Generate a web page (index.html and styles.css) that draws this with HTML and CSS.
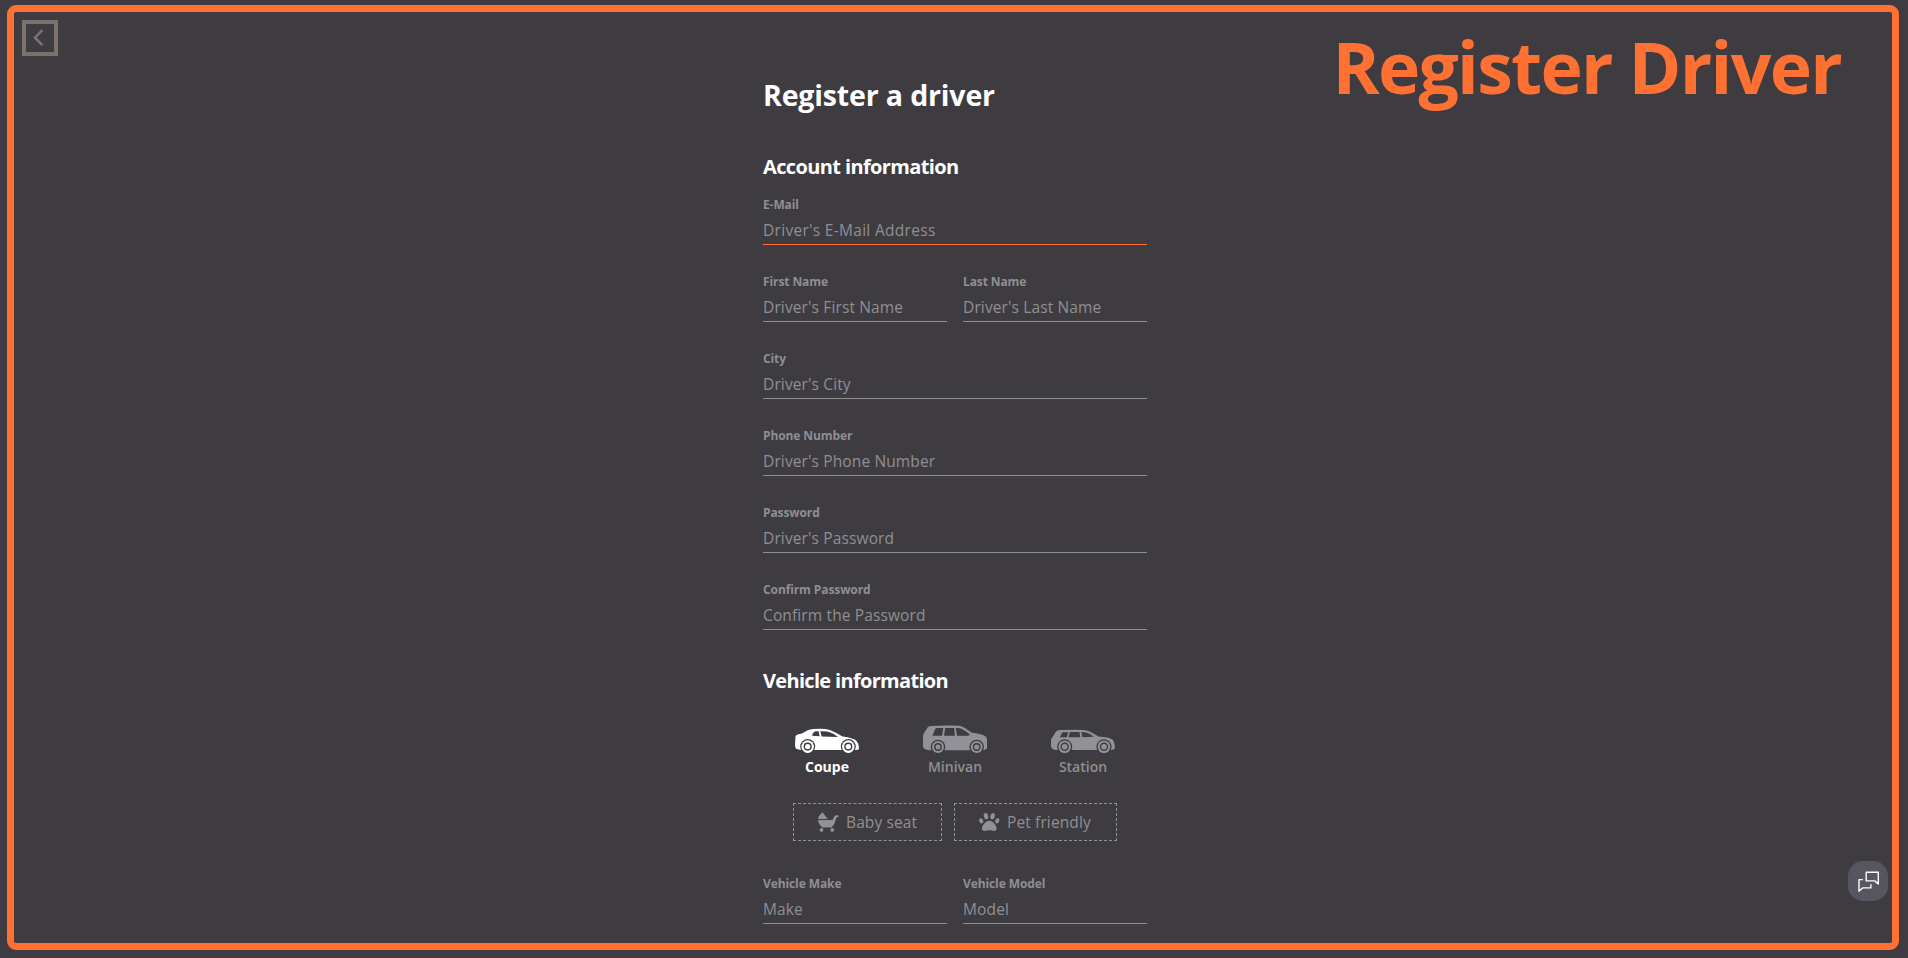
FILE: index.html
```
<!DOCTYPE html>
<html lang="en">
<head>
<meta charset="utf-8">
<title>Register Driver</title>
<link rel="stylesheet" href="styles.css">
</head>
<body>
<div class="frame">
  <button class="back" aria-label="Back"><svg width="30" height="30" viewBox="0 0 30 30"><path d="M17.300 7.200 L10 14.700 L17.300 22.200"/></svg></button>
  <main class="form">
    <h1>Register a driver</h1>
    <h2>Account information</h2>
    <div class="field active"><label>E-Mail</label><div class="input">Driver's E-Mail Address</div></div>
    <div class="pair">
      <div class="field"><label>First Name</label><div class="input">Driver's First Name</div></div>
      <div class="field"><label>Last Name</label><div class="input">Driver's Last Name</div></div>
    </div>
    <div class="field"><label>City</label><div class="input">Driver's City</div></div>
    <div class="field"><label>Phone Number</label><div class="input">Driver's Phone Number</div></div>
    <div class="field"><label>Password</label><div class="input">Driver's Password</div></div>
    <div class="field"><label>Confirm Password</label><div class="input">Confirm the Password</div></div>
    <h2 class="vehicle">Vehicle information</h2>
    <div class="types">
      <div class="type selected">
        <svg width="64" height="32" viewBox="0 0 64 32">
          <path class="body" d="M0 23 L.5 14.500 Q1 12.600 3.500 12.300 L7 11.500 Q13 7.400 18 7 Q29 6 35 8 Q41 10.500 47.500 14.500 Q59 16 61.500 19 Q64 22 64 25.500 L63.500 27.800 L60 28 H6 L1.500 27 Q0 26 0 23Z"/>
          <path class="cut" d="M17.200 13.800 Q17 11 20.500 9.300 H23.600 L24.600 14.200Z M25.200 9.300 Q30 8.800 34 10 Q39 11.500 43 14.900 L26.700 14.400Z"/>
          <circle class="cut" cx="12.700" cy="24.600" r="7.500"/><circle class="body" cx="12.700" cy="24.600" r="6.300"/><circle class="ring" cx="12.700" cy="24.600" r="3.400"/>
          <circle class="cut" cx="53.300" cy="24.600" r="7.500"/><circle class="body" cx="53.300" cy="24.600" r="6.300"/><circle class="ring" cx="53.300" cy="24.600" r="3.400"/>
        </svg>
        <span>Coupe</span>
      </div>
      <div class="type">
        <svg width="64" height="32" viewBox="0 0 64 32">
          <path class="body" d="M0 24 V15 Q0 13 1 11 L4.500 5.500 Q5.500 4.200 8 4 Q24 3 36 3.800 Q39 4 42 6 L49 10.800 Q57 11.500 62 14 Q64 15 64 18 V26.500 L61 28.200 H7 Q0 28 0 24Z"/>
          <path class="cut" d="M9.500 13.700 L12.300 6.800 Q12.700 6 14 6 H20.300 L19 13.700Z M21 13.700 L22.200 6 H31.200 L31.900 13.700Z M32.800 6 Q37 5.800 39 7 L46 11.500 Q47.500 13.300 44.500 13.700 H34Z"/>
          <circle class="cut" cx="15" cy="25" r="7.300"/><circle class="body" cx="15" cy="25" r="6"/><circle class="ring" cx="15" cy="25" r="3.200"/>
          <circle class="cut" cx="53.700" cy="25" r="7.300"/><circle class="body" cx="53.700" cy="25" r="6"/><circle class="ring" cx="53.700" cy="25" r="3.200"/>
        </svg>
        <span>Minivan</span>
      </div>
      <div class="type">
        <svg width="64" height="32" viewBox="0 0 64 32">
          <path class="body" d="M0 24 V17.500 L5 9.500 Q6 8.300 9 8.100 Q22 7.400 32 8 Q38 8.500 41 10.700 L47.500 14.500 Q58 15 61.500 17.500 Q63 19 63.500 22 L64 26.500 L61 28 H5 Q0 27 0 24Z"/>
          <path class="cut" d="M8.800 15.300 L11.500 10.300 H17.300 L15.700 15.300Z M17.300 15.300 L19 10 H28.400 L29.400 15.300Z M30.200 10 Q35 9.800 38 11.500 L43 14.800 L31.500 15.300Z"/>
          <circle class="cut" cx="13.700" cy="24.800" r="7.600"/><circle class="body" cx="13.700" cy="24.800" r="6.300"/><circle class="ring" cx="13.700" cy="24.800" r="3.500"/>
          <circle class="cut" cx="53" cy="24.800" r="7.600"/><circle class="body" cx="53" cy="24.800" r="6.300"/><circle class="ring" cx="53" cy="24.800" r="3.500"/>
        </svg>
        <span>Station</span>
      </div>
    </div>
    <div class="options">
      <div class="option baby">
        <svg width="21" height="20" viewBox="0 0 21 20"><path d="M0 7 Q.5 3.500 4.500 .3 L9.700 7Z"/><path d="M0 8 H14.500 L16 5 Q16.700 3.200 18.500 3.200 H20.400 V5.200 H18.700 L17.600 8 Q17 12.500 13.500 15.600 H4.700 Q.5 12.500 0 8Z"/><circle cx="3.500" cy="17.900" r="1.900"/><circle cx="14.300" cy="17.900" r="1.900"/></svg>
        <span>Baby seat</span>
      </div>
      <div class="option pet">
        <svg width="21" height="20" viewBox="0 0 21 20"><ellipse cx="7" cy="4.100" rx="2.200" ry="3.200" transform="rotate(-12 7 4.100)"/><ellipse cx="13.600" cy="4.100" rx="2.200" ry="3.200" transform="rotate(12 13.600 4.100)"/><ellipse cx="2.200" cy="8.800" rx="1.900" ry="2.700" transform="rotate(-22 2.200 8.800)"/><ellipse cx="18.300" cy="8.800" rx="1.900" ry="2.700" transform="rotate(22 18.300 8.800)"/><path d="M10.300 8.700 C6.500 8.700 2.900 14 2.900 16.600 C2.900 18.400 4 18.900 5.200 18.900 C7 18.900 8.300 18.200 10.300 18.200 C12.300 18.200 13.600 18.900 15.400 18.900 C16.600 18.900 17.700 18.400 17.700 16.600 C17.700 14 14.100 8.700 10.300 8.700Z"/></svg>
        <span>Pet friendly</span>
      </div>
    </div>
    <div class="pair">
      <div class="field"><label>Vehicle Make</label><div class="input">Make</div></div>
      <div class="field"><label>Vehicle Model</label><div class="input">Model</div></div>
    </div>
  </main>
  <div class="banner">Register Driver</div>
  <button class="chat" aria-label="Chat"><svg width="40" height="40" viewBox="0 0 40 40"><path d="M18.200 11.200 H30.300 V23 L26.700 19.900 H18.200Z M14.800 18.600 H11 V30.200 L14.600 26.900 H22.900 V23.300"/></svg></button>
</div>
</body>
</html>
```

FILE: styles.css
```
* { box-sizing: border-box; }
html, body { margin: 0; height: 100%; }
body {
  background: #3e3c41;
  font-family: "Open Sans", "Noto Sans", sans-serif;
  color: #8f8f93;
  padding: 5px 9px 8px 7px;
  overflow: hidden;
}
.frame {
  position: relative;
  height: 945px;
  border: 7px solid #ff7133;
  border-radius: 9px;
  overflow: hidden;
}
button { padding: 0; margin: 0; }
.back {
  position: absolute;
  left: 8px;
  top: 8px;
  width: 36px;
  height: 36px;
  border: 4px solid #7b726c;
  background: none;
}
.back svg { display: block; margin: -1px 0 0 -1px; fill: none; stroke: #7b7671; stroke-width: 2.4; }
.form { width: 384px; margin-left: 749px; padding-top: 63px; }
h1, h2 { margin: 0; color: #fff; font-weight: 700; white-space: nowrap; }
h1 { font-size: 28.5px; line-height: 40px; letter-spacing: -0.15px; }
h2 { font-size: 20px; line-height: 26px; margin: 39px 0 17px; letter-spacing: -0.62px; }
h2.vehicle { margin: 38px 0 28px; letter-spacing: -0.68px; }
.field { height: 48px; margin-bottom: 29px; white-space: nowrap; }
.field label { display: block; height: 21px; font-size: 12px; line-height: 16px; font-weight: 700; letter-spacing: -0.1px; }
.input { height: 27px; border-bottom: 1px solid #8f8f93; font-size: 15.5px; line-height: 24px; letter-spacing: 0.13px; }
.active .input { border-color: #ff7133; letter-spacing: 0.3px; }
.pair { display: grid; grid-template-columns: 184px 184px; gap: 16px; }
.types { display: grid; grid-template-columns: repeat(3, 128px); height: 81px; }
.type { display: flex; flex-direction: column; align-items: center; font-size: 14px; font-weight: 600; line-height: 20px; }
.type svg { display: block; margin-bottom: 3px; }
.type .body { fill: #919297; }
.type .cut { fill: #3e3c41; }
.type .ring { fill: none; stroke: #3e3c41; stroke-width: 1.4; }
.selected { color: #fff; font-weight: 700; }
.selected .body { fill: #fff; }
.options { display: flex; gap: 12px; margin: 0 0 35px 30px; }
.option { display: flex; align-items: center; height: 38px; border: 1px dashed #919297; font-size: 15.5px; line-height: 24px; letter-spacing: 0.12px; padding-left: 24px; gap: 7px; white-space: nowrap; }
.option svg { fill: #919297; }
.baby { width: 149px; }
.pet { width: 163px; }
.banner {
  position: absolute;
  right: 51px;
  top: 6px;
  color: #ff7133;
  font-size: 71.500px;
  font-weight: 700;
  line-height: 98px;
  letter-spacing: -1.7px;
  white-space: nowrap;
}
.chat {
  position: absolute;
  left: 1834px;
  top: 849px;
  width: 40px;
  height: 40px;
  border: 0;
  border-radius: 15px;
  background: #575560;
}
.chat svg { display: block; fill: none; stroke: #fff; stroke-width: 1.4; stroke-linejoin: round; }
```
